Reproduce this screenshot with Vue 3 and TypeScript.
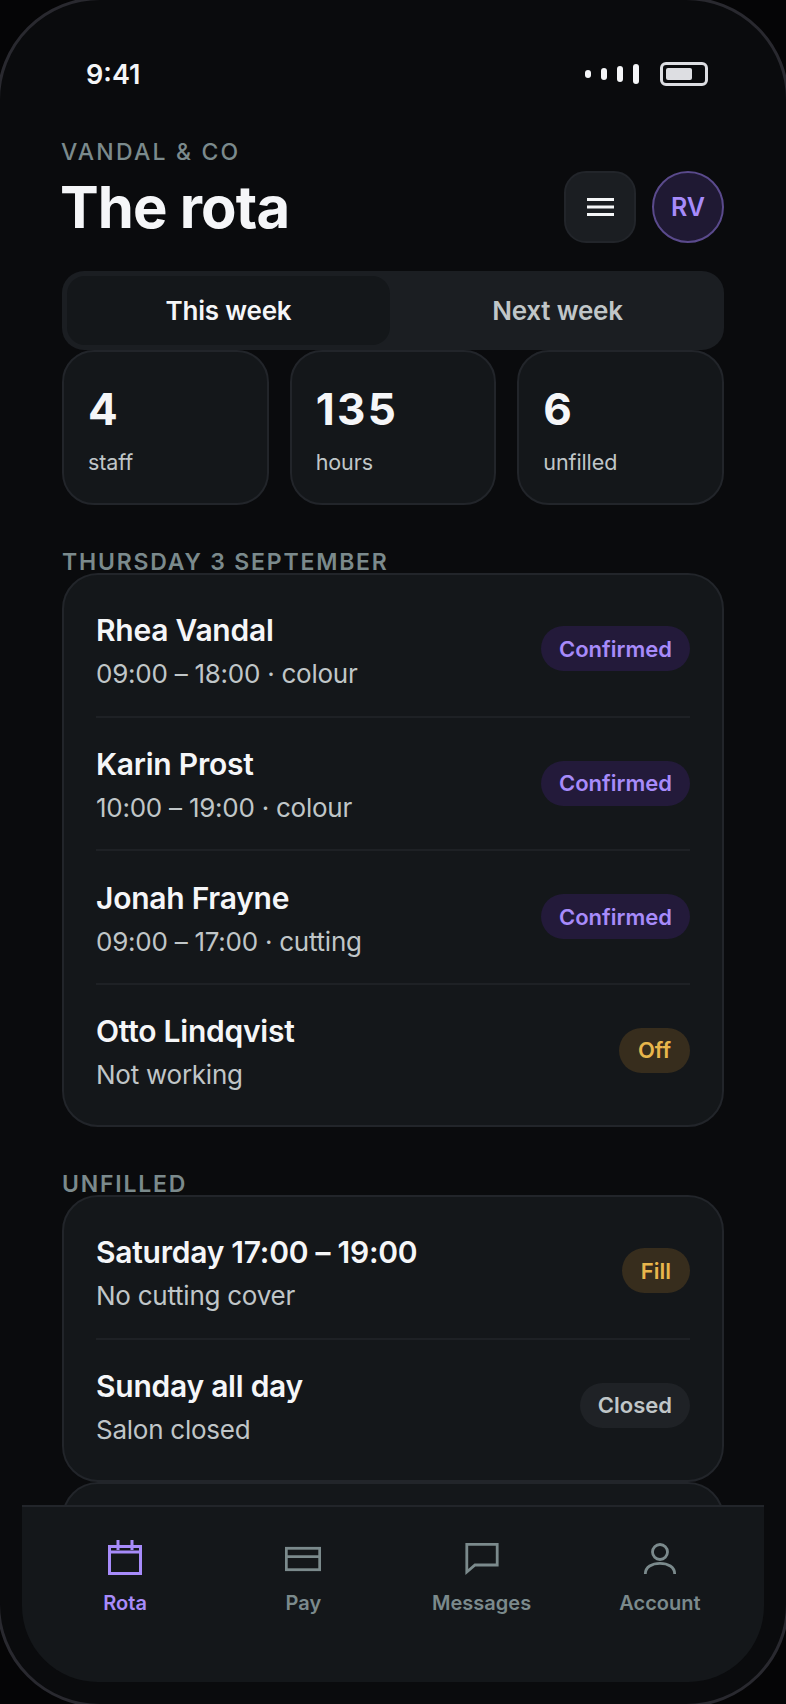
<script setup lang="ts">
interface Row { name: string; sub: string; badge: string; tone: 'purple' | 'amber' | 'grey' }
const stats = [
  { value: '4', label: 'staff' },
  { value: '135', label: 'hours' },
  { value: '6', label: 'unfilled' },
]
const day: Row[] = [
  { name: 'Rhea Vandal', sub: '09:00 – 18:00 · colour', badge: 'Confirmed', tone: 'purple' },
  { name: 'Karin Prost', sub: '10:00 – 19:00 · colour', badge: 'Confirmed', tone: 'purple' },
  { name: 'Jonah Frayne', sub: '09:00 – 17:00 · cutting', badge: 'Confirmed', tone: 'purple' },
  { name: 'Otto Lindqvist', sub: 'Not working', badge: 'Off', tone: 'amber' },
]
const unfilled: Row[] = [
  { name: 'Saturday 17:00 – 19:00', sub: 'No cutting cover', badge: 'Fill', tone: 'amber' },
  { name: 'Sunday all day', sub: 'Salon closed', badge: 'Closed', tone: 'grey' },
]
</script>

<template>
  <div class="phone">
    <div class="status">
      <span class="time">9:41</span>
      <div class="status-right">
        <div class="signal"><i class="s1"></i><i class="s2"></i><i class="s3"></i><i class="s4"></i></div>
        <div class="battery"><i></i></div>
      </div>
    </div>

    <div class="content">
      <header class="head">
        <div>
          <div class="eyebrow">VANDAL &amp; CO</div>
          <h1 class="title">The rota</h1>
        </div>
        <div class="head-actions">
          <button class="menu" aria-label="Menu">
            <svg width="27" height="18" viewBox="0 0 27 18"><path d="M0 1.500h27M0 9h27M0 16.500h27" stroke="#f5f6f8" stroke-width="2.800" fill="none"/></svg>
          </button>
          <div class="avatar">RV</div>
        </div>
      </header>

      <div class="tabs">
        <div class="tab active">This week</div>
        <div class="tab">Next week</div>
      </div>

      <div class="stats">
        <div v-for="s in stats" :key="s.label" class="stat">
          <div class="stat-value">{{ s.value }}</div>
          <div class="stat-label">{{ s.label }}</div>
        </div>
      </div>

      <div class="section">THURSDAY 3 SEPTEMBER</div>
      <div class="card">
        <div v-for="r in day" :key="r.name" class="row">
          <div class="row-text">
            <div class="name">{{ r.name }}</div>
            <div class="sub">{{ r.sub }}</div>
          </div>
          <span class="badge" :class="r.tone">{{ r.badge }}</span>
        </div>
      </div>

      <div class="section">UNFILLED</div>
      <div class="card">
        <div v-for="r in unfilled" :key="r.name" class="row">
          <div class="row-text">
            <div class="name">{{ r.name }}</div>
            <div class="sub">{{ r.sub }}</div>
          </div>
          <span class="badge" :class="r.tone">{{ r.badge }}</span>
        </div>
      </div>
      <div class="card stub"></div>
    </div>

    <nav class="nav">
      <div class="nav-item on">
        <svg width="36" height="36" viewBox="0 0 36 36" fill="none" stroke="currentColor" stroke-width="3"><rect x="2.500" y="6.500" width="31" height="27"/><path d="M2.500 12h31M11 0v10M25 0v10"/></svg>
        <span>Rota</span>
      </div>
      <div class="nav-item">
        <svg width="36" height="36" viewBox="0 0 36 36" fill="none" stroke="currentColor" stroke-width="2.800"><rect x="1.300" y="8.300" width="33.400" height="21.400"/><path d="M1.300 16.700h33.400"/></svg>
        <span>Pay</span>
      </div>
      <div class="nav-item">
        <svg width="36" height="36" viewBox="0 0 36 36" fill="none" stroke="currentColor" stroke-width="2.800"><path d="M2.800 4.300h30.400V25H11l-8.200 7z"/></svg>
        <span>Messages</span>
      </div>
      <div class="nav-item">
        <svg width="36" height="36" viewBox="0 0 36 36" fill="none" stroke="currentColor" stroke-width="2.800"><circle cx="18" cy="12" r="7.500"/><path d="M3.300 34C3.300 27 10 23.300 18 23.300S32.700 27 32.700 34"/></svg>
        <span>Account</span>
      </div>
    </nav>
  </div>
</template>

<style>
html, body { margin: 0; width: 786px; height: 1704px; overflow: hidden; background: #050506; }
</style>

<style scoped>
.phone {
  position: relative;
  box-sizing: border-box;
  width: 792px;
  height: 1710px;
  margin: -3px;
  border: 3px solid #29292f;
  border-radius: 103px;
  background: #0a0b0d;
  overflow: hidden;
  font-family: Inter, "Liberation Sans", sans-serif;
  color: #f5f6f8;
}
.status {
  display: flex;
  justify-content: space-between;
  align-items: center;
  padding: 54px 78px 0 86px;
  height: 40px;
}
.time { font-size: 27px; font-weight: 600; line-height: 34px; padding-top: 2px; }
.status-right { display: flex; align-items: center; gap: 21px; }
.signal { display: flex; align-items: center; gap: 10px; }
.signal i { display: block; width: 6px; border-radius: 3px; background: #f5f6f8; }
.s1 { height: 8px; }
.s2 { height: 12px; }
.s3 { height: 16px; }
.s4 { height: 20px; }
.battery {
  box-sizing: border-box;
  width: 48px;
  height: 24px;
  border: 3px solid #dddee2;
  border-radius: 6px;
  padding: 3px;
}
.battery i { display: block; width: 26px; height: 12px; border-radius: 2px; background: #dddee2; }
.content { padding: 44px 62px 0; }
.head { display: flex; justify-content: space-between; align-items: flex-end; }
.eyebrow { font-size: 23px; font-weight: 500; letter-spacing: 2.2px; color: #7b8a8c; line-height: 28px; margin-left: -1px; }
.title { margin: 5px 0 0 -2px; font-size: 58px; font-weight: 700; letter-spacing: -0.85px; line-height: 72px; }
.head-actions { display: flex; gap: 16px; }
.menu {
  box-sizing: border-box;
  width: 72px; height: 72px;
  display: flex; align-items: center; justify-content: center;
  background: #1b1e22;
  border: 2px solid #22252a;
  border-radius: 22px;
  padding: 0;
}
.avatar {
  box-sizing: border-box;
  width: 72px; height: 72px;
  border-radius: 50%;
  background: #1f1933;
  border: 2px solid #5a4a8c;
  color: #a78bfa;
  font-size: 25px; font-weight: 600;
  display: flex; align-items: center; justify-content: center;
}
.tabs {
  margin-top: 28px;
  display: grid;
  grid-template-columns: 1fr 1fr;
  gap: 6px;
  height: 79px;
  box-sizing: border-box;
  padding: 5px;
  background: #1b1e22;
  border-radius: 22px;
}
.tab { display: flex; align-items: center; justify-content: center; font-size: 26px; font-weight: 600; letter-spacing: -0.2px; color: #c0c6c8; }
.tab.active { background: #14171a; border-radius: 18px; color: #f5f6f8; }
.stats { display: grid; grid-template-columns: repeat(3, 1fr); gap: 21px; }
.stat {
  box-sizing: border-box;
  height: 155px;
  padding: 29px 24px 0;
  background: #14171a;
  border: 2px solid #22252a;
  border-radius: 32px;
}
.stat-value { font-size: 44px; font-weight: 700; letter-spacing: 2.4px; line-height: 56px; }
.stat-label { margin-top: 11px; font-size: 21.5px; color: #c0c6c8; line-height: 28px; letter-spacing: -0.1px; }
.section { margin-top: 47px; font-size: 23px; font-weight: 600; letter-spacing: 1.8px; color: #7b8a8c; line-height: 21px; height: 21px; }
.card {
  box-sizing: border-box;
  background: #14171a;
  border: 2px solid #22252a;
  border-radius: 36px;
  padding: 7px 32px 9px;
}
.row {
  box-sizing: border-box;
  height: 133.5px;
  display: flex;
  align-items: center;
  justify-content: space-between;
  border-top: 2px solid #1e2125;
}
.row:first-child { border-top: 0; }
.row-text { padding-top: 5px; }
.name { font-size: 30px; font-weight: 600; line-height: 36px; letter-spacing: -0.25px; }
.sub { margin-top: 9px; font-size: 26px; color: #c0c6c8; line-height: 34px; letter-spacing: -0.25px; }
.badge {
  height: 45px;
  display: flex;
  align-items: center;
  padding: 0 18px;
  border-radius: 23px;
  font-size: 22px;
  font-weight: 600;
}
.purple { background: #231a3a; color: #a78bfa; }
.amber { background: #372d1d; color: #e8b64c; padding: 0 19px; }
.grey { background: #1f2226; color: #c0c6c8; }
.stub { height: 100px; }
.nav {
  position: absolute;
  left: 22px;
  right: 22px;
  top: 1505px;
  height: 177px;
  box-sizing: border-box;
  display: grid;
  grid-template-columns: repeat(4, 1fr);
  padding: 33px 15px 0 14px;
  background: #14171a;
  border-top: 2px solid #22252a;
  border-radius: 0 0 76px 76px;
}
.nav-item { display: flex; flex-direction: column; align-items: center; gap: 15px; color: #7b8a8c; font-size: 20px; font-weight: 600; line-height: 24px; }
.nav-item svg { display: block; }
.nav-item.on { color: #a78bfa; }
</style>
